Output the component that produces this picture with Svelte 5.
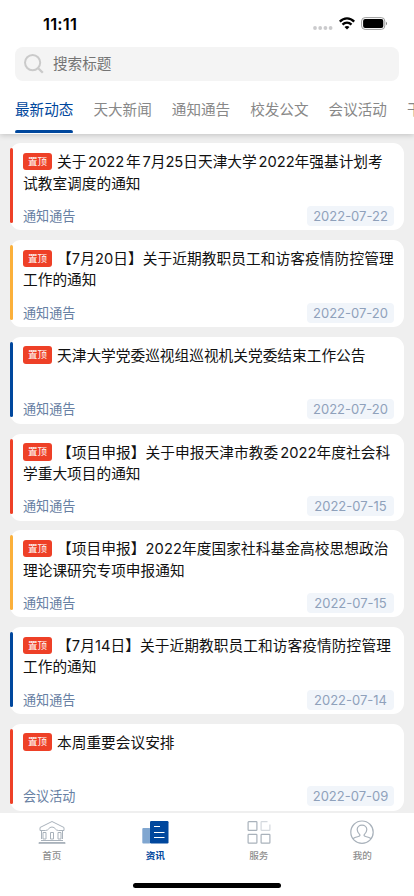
<script lang="ts">
  type Article = {
    lines: string[];
    category: string;
    date: string;
    accent: "red" | "amber" | "blue";
  };

  const tabs = ["最新动态", "天大新闻", "通知通告", "校发公文", "会议活动", "干"];

  const articles: Article[] = [
    {
      lines: ["关于 2022 年 7月25日天津大学 2022年强基计划考", "试教室调度的通知"],
      category: "通知通告",
      date: "2022-07-22",
      accent: "red",
    },
    {
      lines: ["【7月20日】关于近期教职员工和访客疫情防控管理", "工作的通知"],
      category: "通知通告",
      date: "2022-07-20",
      accent: "amber",
    },
    {
      lines: ["天津大学党委巡视组巡视机关党委结束工作公告"],
      category: "通知通告",
      date: "2022-07-20",
      accent: "blue",
    },
    {
      lines: ["【项目申报】关于申报天津市教委 2022年度社会科", "学重大项目的通知"],
      category: "通知通告",
      date: "2022-07-15",
      accent: "red",
    },
    {
      lines: ["【项目申报】2022年度国家社科基金高校思想政治", "理论课研究专项申报通知"],
      category: "通知通告",
      date: "2022-07-15",
      accent: "amber",
    },
    {
      lines: ["【7月14日】关于近期教职员工和访客疫情防控管理", "工作的通知"],
      category: "通知通告",
      date: "2022-07-14",
      accent: "blue",
    },
    {
      lines: ["本周重要会议安排"],
      category: "会议活动",
      date: "2022-07-09",
      accent: "red",
    },
  ];

  let activeTab = $state(0);
</script>

<div class="app">
  <header>
    <div class="status-bar">
      <span class="time">11:11</span>
      <div class="indicators">
        <svg class="signal" width="20" height="4" viewBox="0 0 20 4" fill="#cbcbcd">
          <circle cx="2" cy="2" r="1.9" />
          <circle cx="7.2" cy="2" r="1.9" />
          <circle cx="12.4" cy="2" r="1.9" />
          <circle cx="17.6" cy="2" r="1.9" />
        </svg>
        <svg class="wifi" width="16" height="13" viewBox="0 0 16 13" fill="none" stroke="#000" stroke-width="2.3">
          <path d="M.8 4.6C5 .3 11 .3 15.2 4.6" />
          <path d="M3.5 7.6c2.6-2.6 6.4-2.6 9 0" />
          <path d="M5.5 9.900c1.500-1.300 3.500-1.300 5 0L8 12.500z" fill="#000" stroke="none" />
        </svg>
        <svg class="battery" width="27" height="13" viewBox="0 0 27 13">
          <rect x=".6" y=".6" width="23.2" height="11.8" rx="3.5" fill="none" stroke="#9b9b9b" />
          <rect x="2.1" y="2.1" width="20.2" height="8.8" rx="2" />
          <path d="M25 4.7v3.6c1.4-.6 1.4-3 0-3.6z" fill="#888" />
        </svg>
      </div>
    </div>

    <div class="search">
      <svg width="20" height="20" viewBox="0 0 20 20" fill="none" stroke="#cacaca" stroke-width="2">
        <circle cx="8.6" cy="8.6" r="7.6" />
        <path d="M14.2 14.2l4.6 4.6" stroke-width="2.3" />
      </svg>
      <span>搜索标题</span>
    </div>

    <nav class="tabs">
      {#each tabs as tab, i}
        <button class="tab" class:active={activeTab === i} onclick={() => (activeTab = i)}>{tab}</button>
      {/each}
    </nav>
  </header>

  <main>
    {#each articles as article}
      <article class="card">
        <span class="accent {article.accent}"></span>
        <div class="content">
          <div class="title">
            {#each article.lines as line, i}
              <div class="line">
                {#if i === 0}<span class="pin">置顶</span>{/if}
                <span class:bracket={line.startsWith("【")}>{line}</span>
              </div>
            {/each}
          </div>
          <div class="meta">
            <span class="category">{article.category}</span>
            <span class="date">{article.date}</span>
          </div>
        </div>
      </article>
    {/each}
  </main>

  <footer>
    <nav class="tabbar">
      <a class="item" href="#home">
        <svg width="28" height="24" viewBox="0 0 28 24" fill="none" stroke="#a9b2bb">
          <path d="M14 1.500L2 7.500v3h5.500c3.500 0 3-3.500 6.500-3.500s3 3.500 6.500 3.500H26v-3z" />
          <path d="M3.500 10.500v8.500M24.500 10.500v8.500" />
          <path d="M5 12.500h3v6.500H5zM12.500 12.500h3v6.500h-3zM20 12.500h3v6.500h-3z" />
          <path d="M3 20.500h22M1 22.500h26v1.200H1z" />
        </svg>
        <span>首页</span>
      </a>
      <a class="item current" href="#news">
        <svg width="28" height="24" viewBox="0 0 28 24">
          <rect x="1.300" y="8" width="8" height="15.500" rx="1" fill="#80a6d0" />
          <rect x="9" y="1" width="18.500" height="22.500" rx="1.200" fill="#00479d" />
          <path d="M13 6.500h6M13 12.500h10.500M13 17.500h10.500" stroke="#fff" stroke-width="1" />
        </svg>
        <span>资讯</span>
      </a>
      <a class="item" href="#services">
        <svg width="28" height="24" viewBox="0 0 28 24" fill="none" stroke="#a9b2bb" stroke-width="1.200">
          <rect x="3.100" y="1.600" width="8.800" height="8.800" rx=".7" />
          <rect x="3.100" y="14.400" width="8.800" height="8.800" rx=".7" />
          <rect x="16.100" y="14.400" width="8.800" height="8.800" rx=".7" />
          <path d="M22.500 1.600h-5.700q-.7 0-.7.700v7.400q0 .7.700.7h7.400q.7 0 .7-.7V4.500" stroke="#d3d8dd" />
        </svg>
        <span>服务</span>
      </a>
      <a class="item" href="#me">
        <svg width="28" height="24" viewBox="0 0 28 24" fill="none" stroke="#a9b2bb" stroke-width="1.200">
          <circle cx="14" cy="12.200" r="11.200" />
          <path d="M4.800 18.700c1.500-1.200 3.500-1.700 5.600-2.200 1.700-.4 2-1.300 1-2.300-1.400-1.500-2.200-2.800-2.200-4.600 0-2.600 2.100-4.400 4.800-4.400s4.800 1.800 4.800 4.400c0 1.800-.8 3.100-2.200 4.600-1 1-.7 1.900 1 2.300 2.100.5 4.100 1 5.600 2.200" />
        </svg>
        <span>我的</span>
      </a>
    </nav>
    <div class="home-indicator"></div>
  </footer>
</div>

<style>
  :global(body) {
    background: #efefef;
    overflow: hidden;
  }

  .app {
    width: 414px;
    height: 896px;
    display: flex;
    flex-direction: column;
    overflow: hidden;
    background: #efefef;
    font-family: Inter, "Noto Sans CJK SC", sans-serif;
  }

  header {
    flex: none;
    height: 134px;
    background: #fff;
    box-shadow: 0 1px 6px rgba(0, 0, 0, 0.2);
    z-index: 1;
  }

  .status-bar {
    height: 47px;
    box-sizing: border-box;
    padding: 14px 26px 0 43px;
    display: flex;
    justify-content: space-between;
  }

  .time {
    font-size: 16.5px;
    font-weight: 600;
    line-height: 20px;
    letter-spacing: 0.2px;
  }

  .indicators {
    display: flex;
    align-items: flex-start;
    padding-top: 3px;
  }

  .signal {
    margin: 9px 6px 0 0;
  }

  .wifi {
    margin-right: 6px;
  }

  .search {
    display: flex;
    align-items: center;
    gap: 9px;
    height: 33.5px;
    margin: 0 15px;
    padding-left: 9px;
    border-radius: 8px;
    background: #f4f4f4;
    color: #747474;
    font-size: 14.6px;
  }

  .search span {
    margin-top: -2px;
  }

  .tabs {
    display: flex;
    gap: 20px;
    height: 52.5px;
    padding-left: 15px;
    overflow: hidden;
  }

  .tab {
    flex: none;
    padding: 6px 0 0;
    border: none;
    background: none;
    font: inherit;
    font-size: 14.6px;
    color: #888;
    display: flex;
    flex-direction: column;
    align-items: stretch;
    justify-content: space-between;
    line-height: 46px;
  }

  .tab::after {
    content: "";
    height: 3px;
    margin-top: -3px;
    border-radius: 2px 2px 1px 1px;
  }

  .tab.active {
    color: #00479d;
  }

  .tab.active::after {
    background: #00479d;
  }

  main {
    flex: 1;
    min-height: 0;
    overflow: hidden;
    padding: 9.3px 10px 0;
  }

  .card {
    display: flex;
    align-items: flex-start;
    height: 87px;
    margin-bottom: 9.75px;
    border-radius: 11px;
    background: #fff;
  }

  .accent {
    flex: none;
    width: 3px;
    height: 75px;
    margin-top: 5px;
    border-radius: 2px;
  }

  .red {
    background: #ee4027;
  }

  .amber {
    background: #fbb03b;
  }

  .blue {
    background: #00479d;
  }

  .content {
    flex: 1;
    min-width: 0;
    padding: 9px 10px 0 10px;
  }

  .title {
    height: 53.5px;
    color: #111;
    font-size: 14.7px;
    line-height: 21.2px;
  }

  .line {
    display: flex;
    align-items: flex-start;
    white-space: nowrap;
    word-spacing: -2.4px;
  }

  .bracket {
    letter-spacing: 0.07px;
  }

  .pin {
    width: 29px;
    height: 17.5px;
    margin: 0.7px 5px 0 0;
    border-radius: 3px;
    background: #ee4027;
    color: #fff;
    font-size: 9.5px;
    line-height: 17px;
    text-align: center;
  }

  .meta {
    display: flex;
    align-items: center;
    justify-content: space-between;
    height: 20px;
  }

  .category {
    margin-top: -1px;
    font-size: 13.1px;
    color: #6780a3;
  }

  .date {
    width: 87px;
    height: 20px;
    border-radius: 4px;
    background: #f1f5fa;
    color: #8fa1bb;
    font-size: 13px;
    line-height: 20px;
    text-align: center;
  }

  footer {
    flex: none;
    height: 83px;
    background: #fff;
  }

  .tabbar {
    display: grid;
    grid-template-columns: repeat(4, 1fr);
    height: 70px;
    padding-top: 7px;
    box-sizing: border-box;
  }

  .item {
    display: flex;
    flex-direction: column;
    align-items: center;
    color: #8f8f8f;
    font-size: 9.6px;
    font-weight: 500;
    line-height: 14px;
    text-decoration: none;
  }

  .item span {
    margin-top: 5px;
  }

  .item.current {
    color: #00479d;
    font-weight: 700;
  }

  .home-indicator {
    width: 148px;
    height: 5px;
    margin: 0 auto;
    border-radius: 3px;
    background: #000;
  }
</style>
